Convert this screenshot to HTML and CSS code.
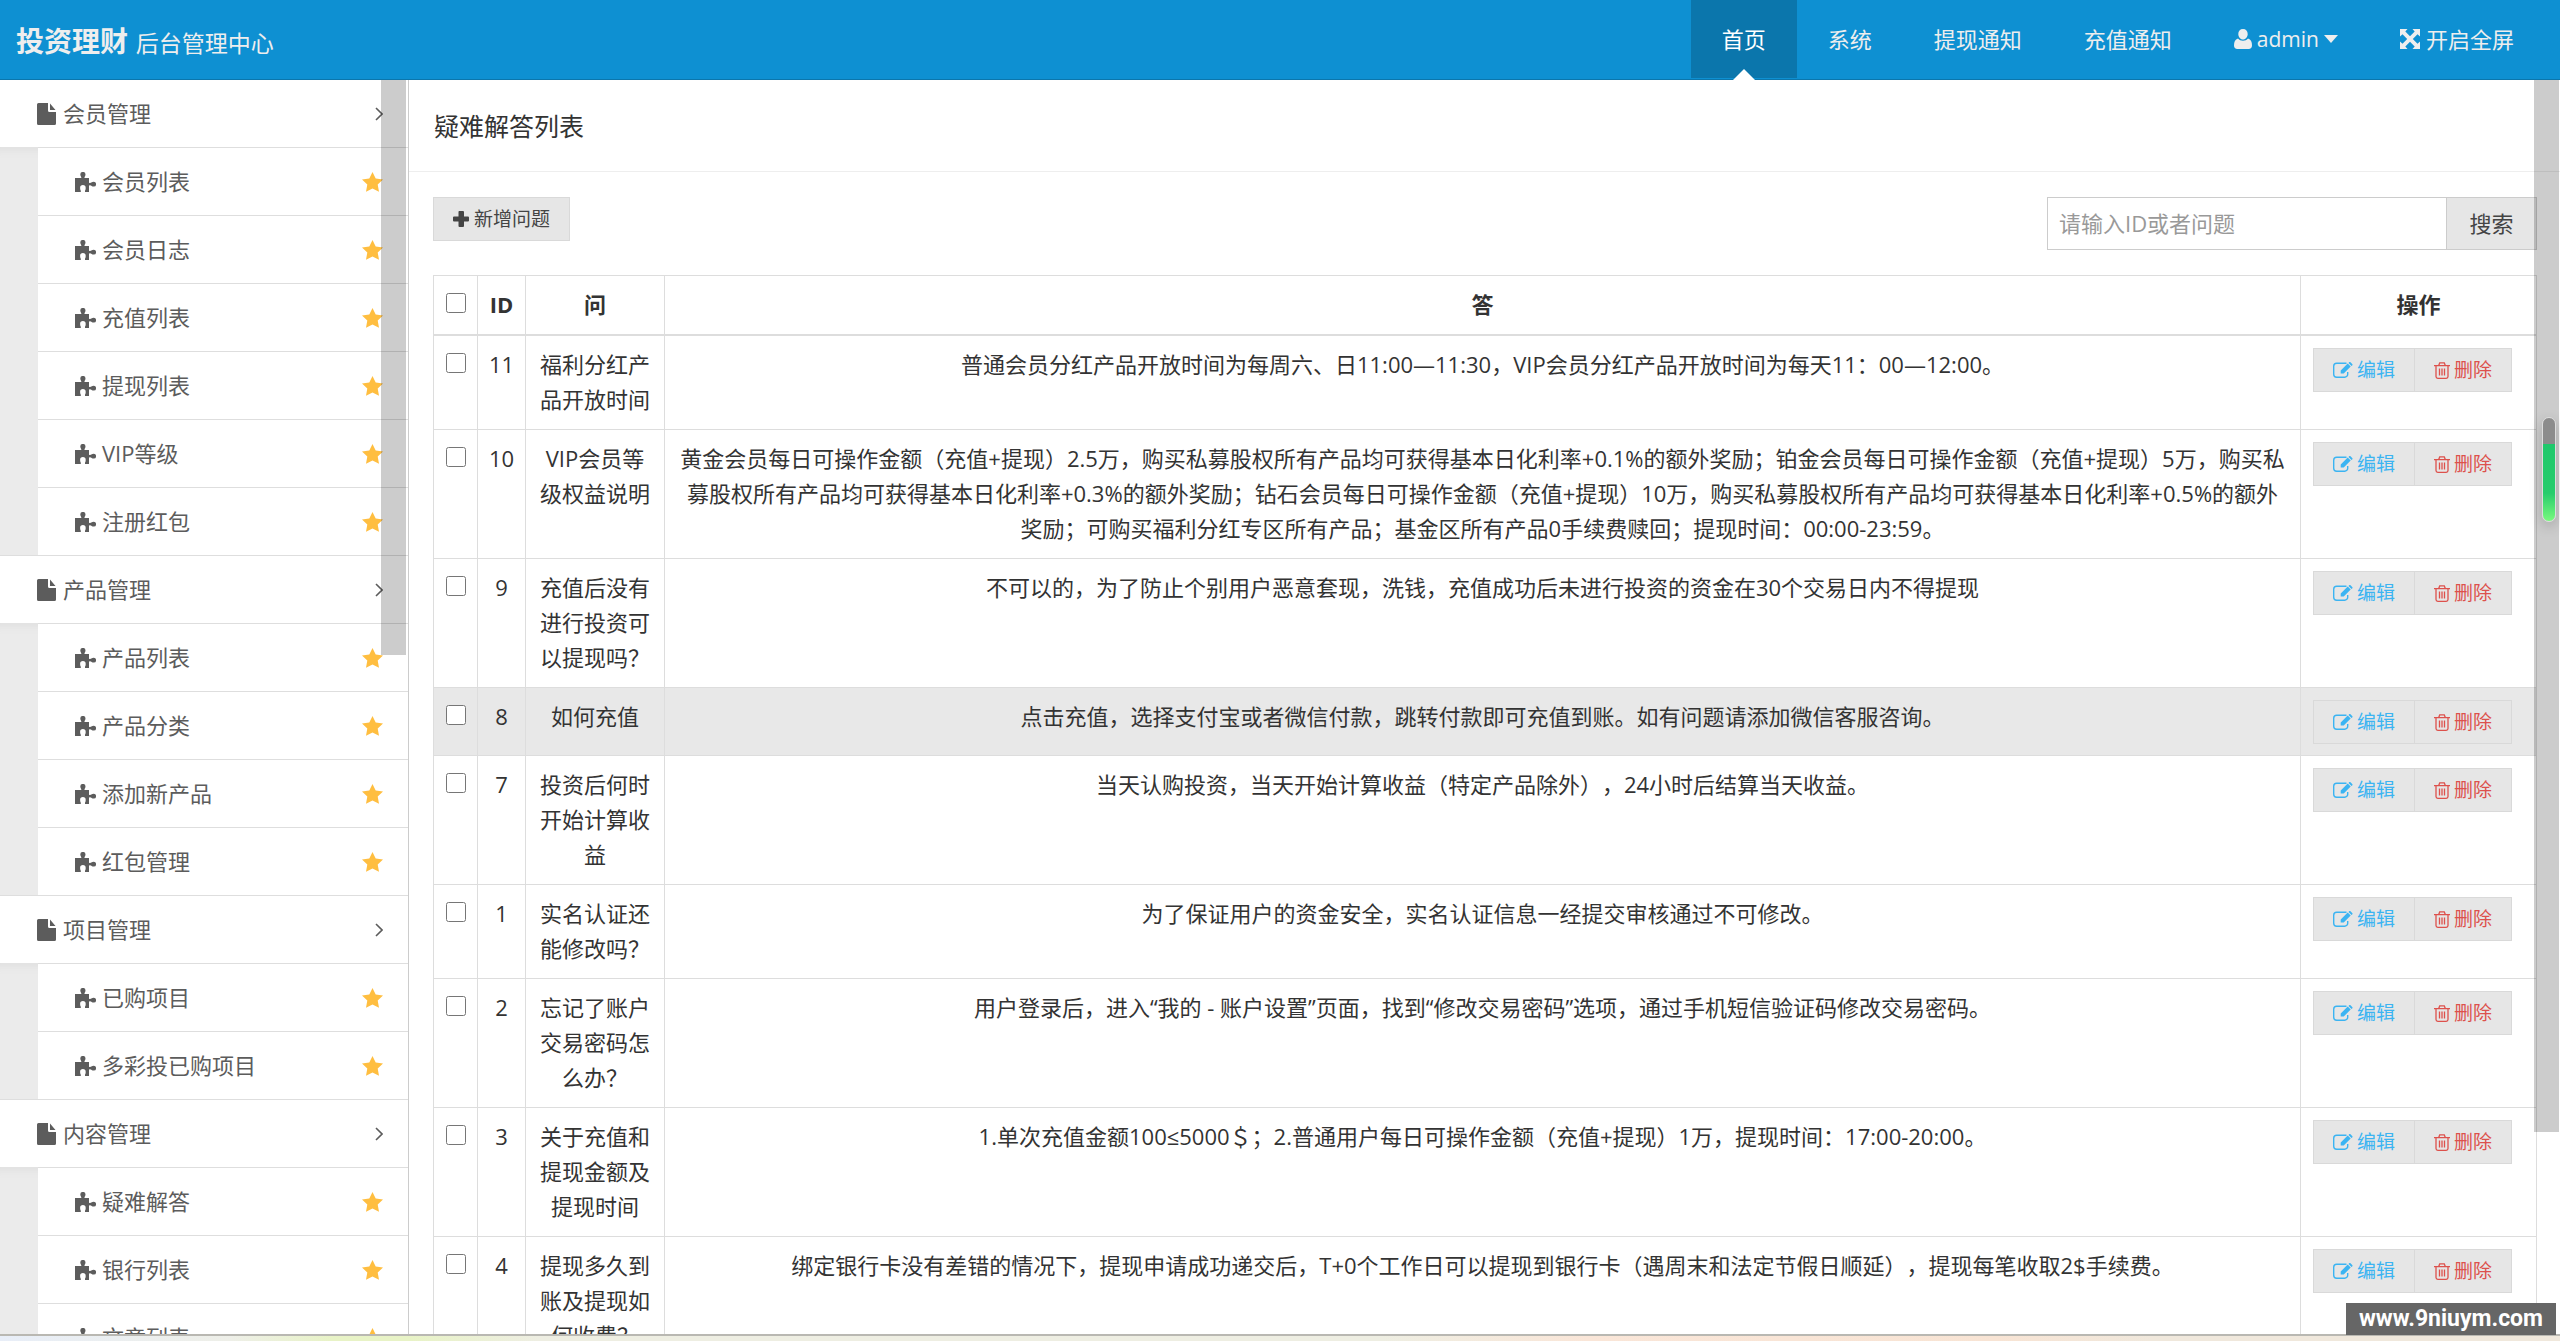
FILE: index.html
```html
<!DOCTYPE html>
<html lang="zh-CN">
<head>
<meta charset="utf-8">
<title>疑难解答列表</title>
<link rel="stylesheet" href="styles.css">
</head>
<body>
<svg class="sprite" aria-hidden="true">
  <symbol id="file" viewBox="0 0 20 22"><path d="M1.500 0H11v7.500A1.500 1.500 0 0 0 12.500 9H19v11.500A1.500 1.500 0 0 1 17.500 22h-16A1.500 1.500 0 0 1 0 20.500v-19A1.500 1.500 0 0 1 1.500 0zM13 .500 18.500 7H13z"/></symbol>
  <symbol id="puzzle" viewBox="0 0 21 20"><path d="M0 6h6.200c.6-1-.9-1.600-.9-3.500a2.600 2.600 0 0 1 5.200 0C10.500 4.400 9 5 9.600 6H14v4.700c1 .6 1.600.4 2.300-.1.800-.6 1.500-.8 2.500-.8a2.200 2.200 0 0 1 2.200 2.400 2.200 2.200 0 0 1-2.200 2.400c-1 0-1.700-.2-2.500-.8-.7-.5-1.300-.7-2.300-.1V20h-4v-1.300c.5-.8.700-1.600.7-2.700 0-2.200-1-3-2.800-3s-2.800.8-2.800 3c0 1.100.2 1.900.7 2.700V20H0z"/></symbol>
  <symbol id="star" viewBox="0 0 21 20"><path d="M10.500 0l3.200 6.500 7.300 1-5.300 5 1.300 7.200-6.500-3.300L4 19.700l1.300-7.200L0 7.500l7.300-1z"/></symbol>
  <symbol id="chevron" viewBox="0 0 8 14"><path d="M1 1l6 6-6 6" fill="none" stroke="currentColor" stroke-width="1.600"/></symbol>
  <symbol id="user" viewBox="0 0 18 20"><path d="M9 0c3 0 4.700 2.100 4.700 5S11.800 10.500 9 10.500 4.300 7.900 4.300 5 6 0 9 0zM4 9.500c1.300 1.500 3 2.200 5 2.200s3.700-.7 5-2.200c3 .8 4 3.500 4 7 0 2.300-1.300 3.500-3.300 3.500H3.300C1.300 20 0 18.800 0 16.500c0-3.500 1-6.200 4-7z"/></symbol>
  <symbol id="caret" viewBox="0 0 14 8"><path d="M0 0h14L7 8z"/></symbol>
  <symbol id="expand" viewBox="0 0 20 20"><path d="M0 0h7.500L5.300 2.500 10 7.200l4.700-4.700L12.500 0H20v7.500l-2.500-2.200L12.800 10l4.700 4.700 2.500-2.200V20h-7.500l2.200-2.500L10 12.800l-4.700 4.700L7.500 20H0v-7.500l2.500 2.200L7.200 10 2.500 5.300 0 7.500z"/></symbol>
  <symbol id="plus" viewBox="0 0 16 16"><path d="M6 0h4a1 1 0 0 1 1 1v4.500h4a1 1 0 0 1 1 1v3a1 1 0 0 1-1 1h-4V15a1 1 0 0 1-1 1H6.500a1 1 0 0 1-1-1v-4.500H1a1 1 0 0 1-1-1v-3a1 1 0 0 1 1-1h4.500V1A1 1 0 0 1 6 0z"/></symbol>
  <symbol id="edit" viewBox="0 0 20 16"><path d="M13.500 1.200H3.700a3 3 0 0 0-3 3v8a3 3 0 0 0 3 3h8a3 3 0 0 0 3-3V10" fill="none" stroke="currentColor" stroke-width="1.400"/><path d="M14.700 1.600l3 3-7 7h-3v-3zM15.500.9l.6-.6a1 1 0 0 1 1.400 0L19.200 2a1 1 0 0 1 0 1.400l-.7.6z"/></symbol>
  <symbol id="trash" viewBox="0 0 16 17"><path d="M0 3.700h16M4.700 3.500l1-2.600h4.600l1 2.600M2 3.700V14.500a1.800 1.800 0 0 0 1.800 1.800h8.400A1.800 1.800 0 0 0 14 14.500V3.700M5.500 6.500v7M8 6.500v7M10.500 6.500v7" fill="none" stroke="currentColor" stroke-width="1.300"/></symbol>
</svg>

<header class="topbar">
  <div class="brand"><strong>投资理财</strong> <small>后台管理中心</small></div>
  <nav class="topnav">
    <a class="active" href="#">首页</a>
    <a href="#">系统</a>
    <a href="#">提现通知</a>
    <a href="#">充值通知</a>
    <a class="account" href="#"><svg class="i-user"><use href="#user"/></svg>admin<svg class="i-caret"><use href="#caret"/></svg></a>
    <a href="#"><svg class="i-expand"><use href="#expand"/></svg>开启全屏</a>
  </nav>
</header>

<div class="shell">
  <aside class="sidebar">
    <ul class="menu">
      <li><a class="group" href="#"><svg class="i-file"><use href="#file"/></svg>会员管理<svg class="i-chevron"><use href="#chevron"/></svg></a>
        <ul class="sub">
          <li><a href="#"><svg class="i-puzzle"><use href="#puzzle"/></svg>会员列表<svg class="i-star"><use href="#star"/></svg></a></li>
          <li><a href="#"><svg class="i-puzzle"><use href="#puzzle"/></svg>会员日志<svg class="i-star"><use href="#star"/></svg></a></li>
          <li><a href="#"><svg class="i-puzzle"><use href="#puzzle"/></svg>充值列表<svg class="i-star"><use href="#star"/></svg></a></li>
          <li><a href="#"><svg class="i-puzzle"><use href="#puzzle"/></svg>提现列表<svg class="i-star"><use href="#star"/></svg></a></li>
          <li><a href="#"><svg class="i-puzzle"><use href="#puzzle"/></svg>VIP等级<svg class="i-star"><use href="#star"/></svg></a></li>
          <li><a href="#"><svg class="i-puzzle"><use href="#puzzle"/></svg>注册红包<svg class="i-star"><use href="#star"/></svg></a></li>
        </ul>
      </li>
      <li><a class="group" href="#"><svg class="i-file"><use href="#file"/></svg>产品管理<svg class="i-chevron"><use href="#chevron"/></svg></a>
        <ul class="sub">
          <li><a href="#"><svg class="i-puzzle"><use href="#puzzle"/></svg>产品列表<svg class="i-star"><use href="#star"/></svg></a></li>
          <li><a href="#"><svg class="i-puzzle"><use href="#puzzle"/></svg>产品分类<svg class="i-star"><use href="#star"/></svg></a></li>
          <li><a href="#"><svg class="i-puzzle"><use href="#puzzle"/></svg>添加新产品<svg class="i-star"><use href="#star"/></svg></a></li>
          <li><a href="#"><svg class="i-puzzle"><use href="#puzzle"/></svg>红包管理<svg class="i-star"><use href="#star"/></svg></a></li>
        </ul>
      </li>
      <li><a class="group" href="#"><svg class="i-file"><use href="#file"/></svg>项目管理<svg class="i-chevron"><use href="#chevron"/></svg></a>
        <ul class="sub">
          <li><a href="#"><svg class="i-puzzle"><use href="#puzzle"/></svg>已购项目<svg class="i-star"><use href="#star"/></svg></a></li>
          <li><a href="#"><svg class="i-puzzle"><use href="#puzzle"/></svg>多彩投已购项目<svg class="i-star"><use href="#star"/></svg></a></li>
        </ul>
      </li>
      <li><a class="group" href="#"><svg class="i-file"><use href="#file"/></svg>内容管理<svg class="i-chevron"><use href="#chevron"/></svg></a>
        <ul class="sub">
          <li><a href="#"><svg class="i-puzzle"><use href="#puzzle"/></svg>疑难解答<svg class="i-star"><use href="#star"/></svg></a></li>
          <li><a href="#"><svg class="i-puzzle"><use href="#puzzle"/></svg>银行列表<svg class="i-star"><use href="#star"/></svg></a></li>
          <li><a href="#"><svg class="i-puzzle"><use href="#puzzle"/></svg>文章列表<svg class="i-star"><use href="#star"/></svg></a></li>
        </ul>
      </li>
    </ul>
    <div class="thumb thumb-side"></div>
  </aside>

  <main class="content">
    <h1>疑难解答列表</h1>
    <div class="tools">
      <button class="btn" type="button"><svg class="i-plus"><use href="#plus"/></svg>新增问题</button>
      <form class="search">
        <input type="text" aria-label="搜索问题" placeholder="请输入ID或者问题">
        <button type="button">搜索</button>
      </form>
    </div>
    <table>
      <colgroup><col class="c-check"><col class="c-id"><col class="c-q"><col><col class="c-op"></colgroup>
      <thead>
        <tr><th><input type="checkbox" aria-label="全选"></th><th>ID</th><th>问</th><th>答</th><th>操作</th></tr>
      </thead>
      <tbody>
        <tr><td><input type="checkbox" aria-label="选择 11"></td><td>11</td><td>福利分红产品开放时间</td><td>普通会员分红产品开放时间为每周六、日11:00—11:30，VIP会员分红产品开放时间为每天11：00—12:00。</td><td><div class="ops"><button class="btn edit" type="button"><svg class="i-edit"><use href="#edit"/></svg>编辑</button><button class="btn del" type="button"><svg class="i-trash"><use href="#trash"/></svg>删除</button></div></td></tr>
        <tr><td><input type="checkbox" aria-label="选择 10"></td><td>10</td><td>VIP会员等级权益说明</td><td>黄金会员每日可操作金额（充值+提现）2.5万，购买私募股权所有产品均可获得基本日化利率+0.1%的额外奖励；铂金会员每日可操作金额（充值+提现）5万，购买私募股权所有产品均可获得基本日化利率+0.3%的额外奖励；钻石会员每日可操作金额（充值+提现）10万，购买私募股权所有产品均可获得基本日化利率+0.5%的额外奖励；可购买福利分红专区所有产品；基金区所有产品0手续费赎回；提现时间：00:00-23:59。</td><td><div class="ops"><button class="btn edit" type="button"><svg class="i-edit"><use href="#edit"/></svg>编辑</button><button class="btn del" type="button"><svg class="i-trash"><use href="#trash"/></svg>删除</button></div></td></tr>
        <tr><td><input type="checkbox" aria-label="选择 9"></td><td>9</td><td>充值后没有进行投资可以提现吗？</td><td>不可以的，为了防止个别用户恶意套现，洗钱，充值成功后未进行投资的资金在30个交易日内不得提现</td><td><div class="ops"><button class="btn edit" type="button"><svg class="i-edit"><use href="#edit"/></svg>编辑</button><button class="btn del" type="button"><svg class="i-trash"><use href="#trash"/></svg>删除</button></div></td></tr>
        <tr class="hover"><td><input type="checkbox" aria-label="选择 8"></td><td>8</td><td>如何充值</td><td>点击充值，选择支付宝或者微信付款，跳转付款即可充值到账。如有问题请添加微信客服咨询。</td><td><div class="ops"><button class="btn edit" type="button"><svg class="i-edit"><use href="#edit"/></svg>编辑</button><button class="btn del" type="button"><svg class="i-trash"><use href="#trash"/></svg>删除</button></div></td></tr>
        <tr><td><input type="checkbox" aria-label="选择 7"></td><td>7</td><td>投资后何时开始计算收益</td><td>当天认购投资，当天开始计算收益（特定产品除外），24小时后结算当天收益。</td><td><div class="ops"><button class="btn edit" type="button"><svg class="i-edit"><use href="#edit"/></svg>编辑</button><button class="btn del" type="button"><svg class="i-trash"><use href="#trash"/></svg>删除</button></div></td></tr>
        <tr><td><input type="checkbox" aria-label="选择 1"></td><td>1</td><td>实名认证还能修改吗？</td><td>为了保证用户的资金安全，实名认证信息一经提交审核通过不可修改。</td><td><div class="ops"><button class="btn edit" type="button"><svg class="i-edit"><use href="#edit"/></svg>编辑</button><button class="btn del" type="button"><svg class="i-trash"><use href="#trash"/></svg>删除</button></div></td></tr>
        <tr><td><input type="checkbox" aria-label="选择 2"></td><td>2</td><td>忘记了账户交易密码怎么办？</td><td>用户登录后，进入“我的 - 账户设置”页面，找到“修改交易密码”选项，通过手机短信验证码修改交易密码。</td><td><div class="ops"><button class="btn edit" type="button"><svg class="i-edit"><use href="#edit"/></svg>编辑</button><button class="btn del" type="button"><svg class="i-trash"><use href="#trash"/></svg>删除</button></div></td></tr>
        <tr><td><input type="checkbox" aria-label="选择 3"></td><td>3</td><td>关于充值和提现金额及提现时间</td><td>1.单次充值金额100≤5000＄；2.普通用户每日可操作金额（充值+提现）1万，提现时间：17:00-20:00。</td><td><div class="ops"><button class="btn edit" type="button"><svg class="i-edit"><use href="#edit"/></svg>编辑</button><button class="btn del" type="button"><svg class="i-trash"><use href="#trash"/></svg>删除</button></div></td></tr>
        <tr><td><input type="checkbox" aria-label="选择 4"></td><td>4</td><td>提现多久到账及提现如何收费？</td><td>绑定银行卡没有差错的情况下，提现申请成功递交后，T+0个工作日可以提现到银行卡（遇周末和法定节假日顺延），提现每笔收取2$手续费。</td><td><div class="ops"><button class="btn edit" type="button"><svg class="i-edit"><use href="#edit"/></svg>编辑</button><button class="btn del" type="button"><svg class="i-trash"><use href="#trash"/></svg>删除</button></div></td></tr>
      </tbody>
    </table>
  </main>
  <div class="thumb thumb-main"></div>
  <div class="meter"></div>
</div>
<footer class="strip"></footer>
<div class="watermark">www.9niuym.com</div>
</body>
</html>
```

FILE: styles.css
```css
* { box-sizing: border-box; }
body {
  margin: 0;
  height: 100vh;
  display: flex;
  flex-direction: column;
  overflow: hidden;
  font: 22px/35px "Open Sans", "Noto Sans CJK SC", sans-serif;
  text-spacing-trim: space-all;
  color: #333;
  background: #fff;
}
ul { list-style: none; margin: 0; padding: 0; }
a { color: inherit; text-decoration: none; }
button, input { font: inherit; color: inherit; border-radius: 0; margin: 0; }
svg { fill: currentColor; flex: none; }
.sprite { position: absolute; width: 0; height: 0; }

.topbar {
  flex: none;
  height: 80px;
  display: flex;
  justify-content: space-between;
  padding: 0 15px 0 16px;
  background: #0e90d2;
  border-bottom: 1px solid #0b76ac;
  color: #eee;
}
.brand { line-height: 82px; }
.brand strong { font-size: 28px; }
.brand small { margin-left: 2px; font-size: 23px; }
.topnav { display: flex; height: 78px; }
.topnav a { position: relative; display: flex; align-items: center; padding: 0 31px; }
.topnav .account { font-size: 21px; }
.topnav .active { background: #0b76ac; color: #fff; }
.topnav .active::after {
  content: "";
  position: absolute;
  left: 50%;
  bottom: -2px;
  margin-left: -11px;
  border: 11px solid transparent;
  border-top: 0;
  border-bottom-color: #fff;
}
.i-user { width: 18px; height: 20px; margin-right: 5px; }
.i-caret { width: 14px; height: 8px; margin-left: 5px; }
.i-expand { width: 20px; height: 20px; margin-right: 6px; }

.shell { position: relative; flex: 1; min-height: 0; display: flex; }
.sidebar {
  position: relative;
  flex: none;
  width: 409px;
  overflow: hidden;
  border-right: 1px solid #ccc;
  color: #5c5c5c;
}
.menu a {
  display: flex;
  align-items: center;
  height: 68px;
  border-top: 1px solid #dedede;
  padding: 0 25px 0 37px;
  background: #fff;
}
.menu > li:first-child > .group { height: 67px; border-top: 0; }
.sub { padding-left: 38px; background: #ebebeb; box-shadow: inset 0 12px 10px -10px #ddd; }
.i-file { width: 20px; height: 22px; margin-right: 6px; }
.i-chevron { width: 8px; height: 14px; margin-left: auto; }
.i-puzzle { width: 21px; height: 20px; margin-right: 6px; }
.i-star { width: 21px; height: 20px; margin-left: auto; color: #ffbe40; }

.content { flex: 1; min-width: 0; overflow: hidden; }
h1 {
  margin: 0;
  padding: 29px 25px 27px;
  border-bottom: 1px solid #eee;
  font-size: 25px;
  line-height: 35px;
  font-weight: 400;
}
.tools { display: flex; justify-content: space-between; align-items: flex-start; padding: 25px 23px 25px 24px; }
.btn {
  display: flex;
  align-items: center;
  height: 44px;
  padding: 0 19px;
  border: 1px solid #d9d9d9;
  background: #e6e6e6;
  color: #444;
  font-size: 19px;
}
.i-plus { width: 16px; height: 16px; margin-right: 5px; }
.search { display: flex; height: 53px; }
.search input { width: 400px; padding: 0 11px; border: 1px solid #ccc; background: #fff; }
.search input::placeholder { color: #999; opacity: 1; }
.search button { width: 91px; padding: 0; margin-left: -1px; border: 1px solid #ccc; background: #e6e6e6; color: #444; }

table {
  width: calc(100% - 47px);
  margin-left: 24px;
  table-layout: fixed;
  border-collapse: separate;
  border-spacing: 0;
  border: 1px solid #ddd;
  border-width: 1px 0 0 1px;
}
.c-check { width: 44px; }
.c-id { width: 48px; }
.c-q { width: 139px; }
.c-op { width: 236px; }
th, td {
  padding: 11px 12px 12px;
  border: 1px solid #ddd;
  border-width: 0 1px 1px 0;
  text-align: center;
  vertical-align: top;
}
th { border-bottom-width: 2px; }
th:nth-child(2), td:nth-child(2) { padding-left: 0; padding-right: 0; }
th:first-child, td:first-child, td:last-child { padding-top: 12px; padding-bottom: 11px; }
table input { display: block; width: 20px; height: 20px; margin: 5px 0; }
.hover td { background: #e8e8e8; }
.ops { display: flex; }
.edit { color: #3bb4f2; }
.del { color: #dd514c; border-left: 0; }
.i-edit { width: 20px; height: 16px; margin-right: 4px; }
.i-trash { width: 16px; height: 17px; margin-right: 4px; }

.thumb { position: absolute; top: 0; width: 25px; background: rgba(0, 0, 0, .2); }
.thumb-side { right: 2px; height: 575px; }
.thumb-main { right: 1px; height: 1052px; }
.meter {
  position: absolute;
  top: 337px;
  right: 4px;
  width: 14px;
  height: 105px;
  border: 1px solid #ddd;
  border-radius: 7px;
  background: linear-gradient(#8c8c8c 26px, #1fc86b 26px, #27cc6c 75px, #79f97e);
  box-shadow: 0 4px 14px rgba(0, 0, 0, .2);
}
.strip {
  flex: none;
  height: 7px;
  border-top: 2px solid #b9b8b2;
  background: linear-gradient(90deg, #e8eef8, #eeefe8 9%, #e8f3c6 13%, #e8f3c6 16%, #eeeee2 21%, #eeeee2 54%, #fae6d8 62%, #f8e4d4 78%, #f0e8dc 84%);
}
.watermark {
  position: absolute;
  right: 4px;
  bottom: 6px;
  width: 210px;
  height: 32px;
  background: #666;
  color: #fff;
  font: bold 23px/32px Roboto, "Liberation Sans", sans-serif;
  text-align: center;
}
```
